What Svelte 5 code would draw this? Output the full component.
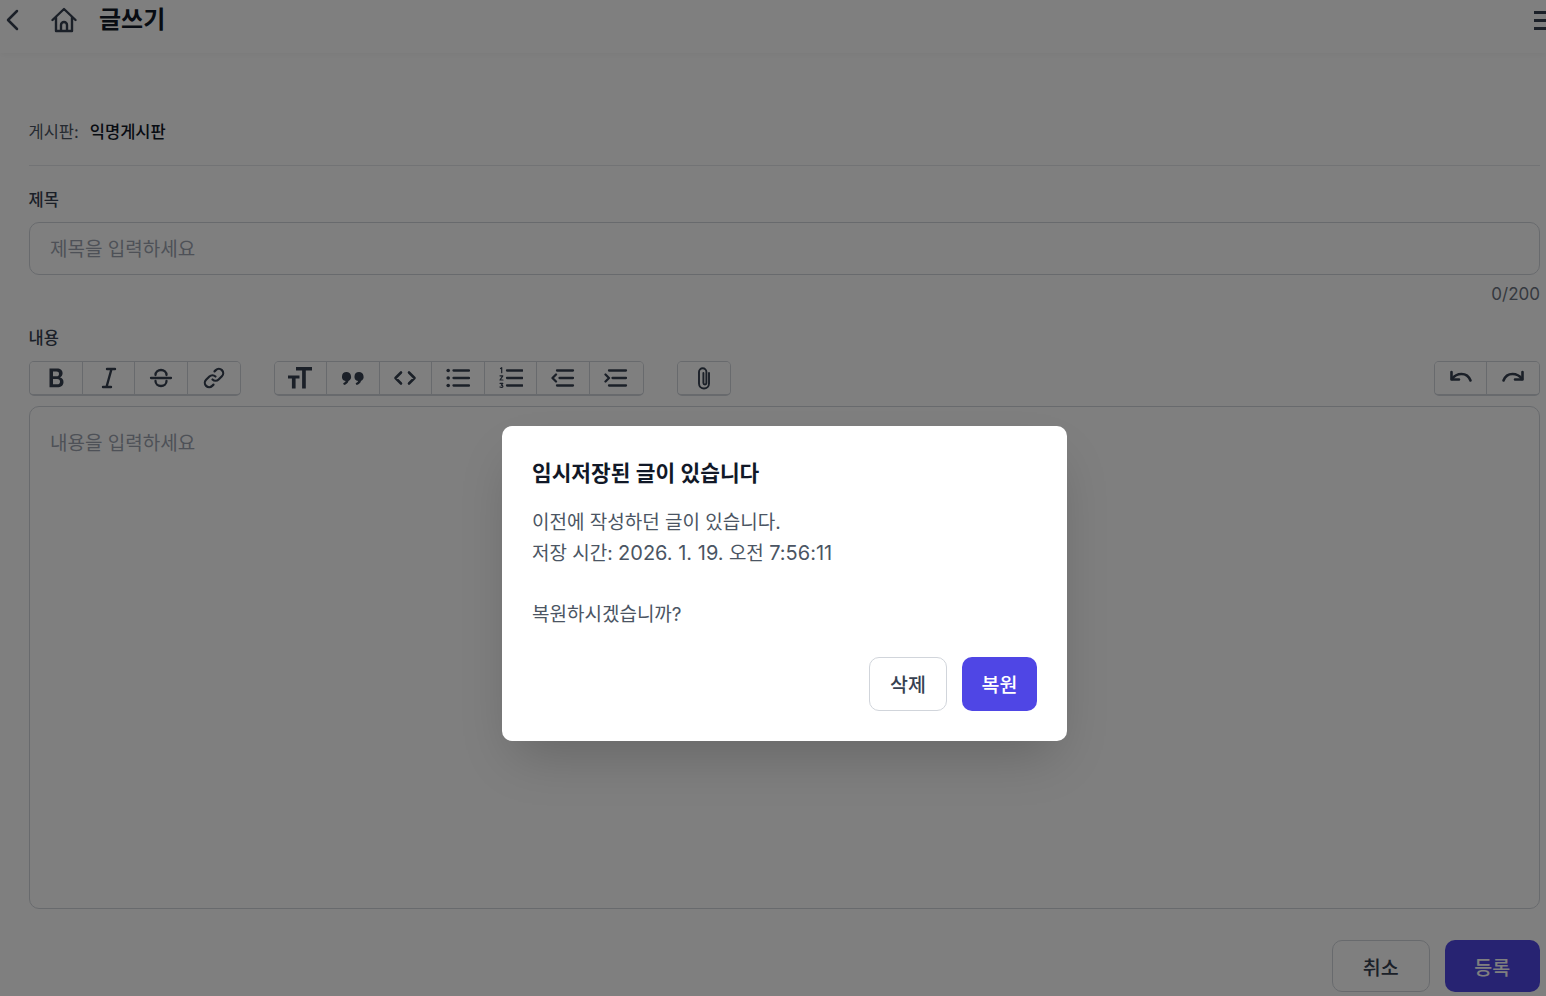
<script lang="ts">
	const formatGroup = [
		{ name: 'bold', width: 53.5 },
		{ name: 'italic', width: 52 },
		{ name: 'strike', width: 52.5 },
		{ name: 'link', width: 52 }
	];
	const blockGroup = ['heading', 'quote', 'code', 'ul', 'ol', 'outdent', 'indent'];
</script>

{#snippet icon(name: string)}
	<svg class="tool-icon" viewBox="0 0 24 24" aria-hidden="true">
		{#if name === 'bold'}
			<path class="fill" d="M5.500 2.500h7.600c3.400 0 5.500 1.800 5.500 4.700 0 1.900-1 3.400-2.700 4.100 2.300.6 3.600 2.300 3.600 4.600 0 3.300-2.400 5.400-6.200 5.400H5.500zM9 5.600v4.600h3.400c1.700 0 2.600-.8 2.600-2.300s-.9-2.300-2.600-2.300zm0 7.500v5.200h4.100c1.900 0 2.900-.9 2.900-2.600s-1-2.600-2.900-2.600z" />
		{:else if name === 'italic'}
			<path d="M10 3h8M6 21h8M14.500 3l-5 18" stroke-width="2.400" />
		{:else if name === 'strike'}
			<path d="M2 12h20M6.500 9c0-3 2.500-5 5.500-5s5.500 2 5.500 5M6.500 15c0 3 2.500 5 5.500 5s5.500-2 5.500-5" stroke-width="2.300" />
		{:else if name === 'link'}
			<path d="M10.500 13.500a4.300 4.300 0 0 0 6.100 0l3.300-3.300a4.300 4.300 0 0 0-6.100-6.100l-1.300 1.300M13.500 10.500a4.300 4.300 0 0 0-6.100 0l-3.300 3.300a4.300 4.300 0 0 0 6.100 6.100l1.300-1.300" stroke-width="2.200" />
		{:else if name === 'heading'}
			<path class="fill" d="M8 1h16v3.400h-6.200v18.100h-3.700V4.400H8zM0 9.500h11.500v3.100H7.600v9.900H3.900v-9.900H0z" />
		{:else if name === 'quote'}
			<path class="fill" d="M5.500 6a4.700 4.700 0 0 1 2 8.900c-.5 2-2.200 3.400-4.500 4l-.9-1.700c1.300-.5 2.200-1.200 2.500-2.100A4.600 4.600 0 0 1 5.500 6zM18 6a4.700 4.700 0 0 1 2 8.900c-.5 2-2.200 3.400-4.500 4l-.9-1.700c1.300-.5 2.200-1.200 2.500-2.100A4.600 4.600 0 0 1 18 6z" />
		{:else if name === 'code'}
			<path d="M8 6.500l-5.500 5.500 5.500 5.500M16 6.500l5.500 5.500-5.500 5.500" stroke-width="2.600" />
		{:else if name === 'ul'}
			<path d="M7.500 4.500h15.500M7.500 12h15.500M7.500 19.500h15.500" stroke-width="2.300" />
			<circle class="fill" cx="2.200" cy="4.500" r="1.800" />
			<circle class="fill" cx="2.200" cy="12" r="1.800" />
			<circle class="fill" cx="2.200" cy="19.500" r="1.800" />
		{:else if name === 'ol'}
			<path d="M8 4.500h15.500M8 12h15.500M8 19.500h15.500" stroke-width="2.300" />
			<path d="M1.500 2.500l1.200-.8v5M1 9.800h2.800L1 14h3M1 17.300h2.800l-1.500 1.900c1.100 0 1.600.5 1.600 1.200 0 1-1.800 1.300-2.900.6" stroke-width="1.200" />
		{:else if name === 'outdent'}
			<path d="M6 4.500h16M8.500 12H22M6 19.500h16" stroke-width="2.300" />
			<path d="M5 8.500L1.500 12 5 15.500" stroke-width="2.300" />
		{:else if name === 'indent'}
			<path d="M5 4.500h17M8.500 12H22M5 19.500h17" stroke-width="2.300" />
			<path d="M1.500 8.500L5 12l-3.500 3.500" stroke-width="2.300" />
		{:else if name === 'clip'}
			<path d="M17 7v10.500a5 5 0 0 1-10 0V6a3.700 3.700 0 0 1 7.400 0v11a1.500 1.500 0 0 1-3 0V7" stroke-width="1.900" />
		{:else if name === 'undo'}
			<path d="M2.500 6v7.500H10" stroke-width="2.600" />
			<path d="M3 13c2.500-3.500 5.500-5 9.500-5 4.500 0 7.500 2.500 9 6.500" stroke-width="2.600" />
		{:else if name === 'redo'}
			<path d="M21.500 6v7.500H14" stroke-width="2.600" />
			<path d="M21 13c-2.500-3.500-5.500-5-9.500-5-4.500 0-7.500 2.500-9 6.500" stroke-width="2.600" />
		{/if}
	</svg>
{/snippet}

<div class="page">
	<header class="topbar">
		<div class="topbar-left">
			<svg class="back" viewBox="0 0 14 22" aria-hidden="true">
				<path d="M12 2L3 11l9 9" />
			</svg>
			<svg class="home" viewBox="0 0 26 26" aria-hidden="true">
				<path d="M1.500 13L13 2l11.500 11M5 10v14h16V10M10 24v-6a3 3 0 0 1 6 0v6" />
			</svg>
			<h1>글쓰기</h1>
		</div>
		<div class="hamburger"><span></span><span></span><span></span></div>
	</header>

	<main class="form">
		<div class="board-row">
			<span class="board-label">게시판:</span>
			<strong>익명게시판</strong>
		</div>

		<label class="field-label title-label" for="title">제목</label>
		<input id="title" class="title-input" placeholder="제목을 입력하세요" />
		<div class="counter">0/200</div>

		<div class="field-label content-label">내용</div>
		<div class="toolbar">
			<div class="tool-group">
				{#each formatGroup as tool}
					<button class="tool" style="width: {tool.width}px">{@render icon(tool.name)}</button>
				{/each}
			</div>
			<div class="tool-group">
				{#each blockGroup as name}
					<button class="tool">{@render icon(name)}</button>
				{/each}
			</div>
			<div class="tool-group">
				<button class="tool">{@render icon('clip')}</button>
			</div>
			<div class="tool-group push-right">
				<button class="tool">{@render icon('undo')}</button>
				<button class="tool">{@render icon('redo')}</button>
			</div>
		</div>
		<div class="editor">내용을 입력하세요</div>

		<div class="actions">
			<button class="btn-cancel">취소</button>
			<button class="btn-submit">등록</button>
		</div>
	</main>

	<div class="overlay">
		<div class="dialog">
			<h2>임시저장된 글이 있습니다</h2>
			<p>
				이전에 작성하던 글이 있습니다.<br />
				저장 시간: <span class="latin">2026. 1. 19.</span> 오전 <span class="latin">7:56:11</span><br /><br />
				복원하시겠습니까?
			</p>
			<div class="dialog-actions">
				<button class="btn-delete">삭제</button>
				<button class="btn-restore">복원</button>
			</div>
		</div>
	</div>
</div>

<style>
	:global(body) {
		margin: 0;
		background: #fff;
		overflow: hidden;
	}

	.page {
		position: relative;
		height: 996px;
		overflow: hidden;
		background: #fff;
		font-family: Inter, "Noto Sans CJK KR", sans-serif;
		color: #111827;
	}

	.topbar {
		display: flex;
		justify-content: space-between;
		align-items: center;
		height: 53px;
		box-sizing: border-box;
		padding: 0 0 13px 5px;
		box-shadow: 0 2px 6px rgba(0, 0, 0, 0.04);
	}

	.topbar-left { display: flex; align-items: center; }

	.back {
		width: 14px;
		height: 22px;
		fill: none;
		stroke: #374151;
		stroke-width: 2.5;
		stroke-linecap: round;
		stroke-linejoin: round;
	}

	.home {
		width: 26px;
		height: 26px;
		margin-left: 32px;
		fill: none;
		stroke: #374151;
		stroke-width: 2.4;
		stroke-linecap: round;
		stroke-linejoin: round;
	}

	h1 {
		margin: 0 0 0 22px;
		font-size: 24px;
		font-weight: 700;
		line-height: 40px;
		color: #111827;
	}

	.hamburger {
		display: flex;
		flex-direction: column;
		gap: 5px;
		width: 20px;
		margin-right: -8px;
	}

	.hamburger span {
		height: 3px;
		background: #374151;
	}

	.form {
		display: flex;
		flex-direction: column;
		padding: 0 6px 0 28.5px;
	}

	.board-row {
		display: flex;
		gap: 11px;
		align-items: center;
		height: 113px;
		box-sizing: border-box;
		padding-top: 43px;
		border-bottom: 1px solid #e5e7eb;
		font-size: 16.5px;
	}

	.board-label { color: #4b5563; }

	.board-row strong { font-weight: 500; color: #111827; }

	.field-label {
		font-size: 16.5px;
		font-weight: 500;
		line-height: 24px;
		color: #374151;
	}

	.title-label { margin-top: 22px; }

	.title-input {
		height: 53px;
		margin-top: 10px;
		box-sizing: border-box;
		padding: 2px 20.5px 0;
		border: 1.5px solid #d1d5db;
		border-radius: 10px;
		font: inherit;
		font-size: 19px;
		outline: none;
	}

	.title-input::placeholder { color: #9ca3af; }

	.counter {
		margin-top: 7px;
		line-height: 24px;
		text-align: right;
		font-size: 17px;
		color: #6b7280;
	}

	.content-label { margin-top: 20px; }

	.toolbar {
		display: flex;
		gap: 33px;
		margin-top: 11px;
	}

	.tool-group {
		display: flex;
		height: 35px;
		box-sizing: border-box;
		border: 1px solid #d1d5db;
		border-bottom-width: 2px;
		border-radius: 5px;
		overflow: hidden;
	}

	.push-right { margin-left: auto; }

	.tool {
		display: flex;
		align-items: center;
		justify-content: center;
		width: 52.6px;
		padding: 0;
		border: 0;
		border-right: 1px solid #d1d5db;
		background: #fff;
	}

	.tool:last-child { border-right: 0; }

	.push-right .tool { width: 52px; }

	.tool-icon {
		width: 24px;
		height: 24px;
		fill: none;
		stroke: #374151;
		stroke-linecap: round;
		stroke-linejoin: round;
	}

	.tool-icon :global(.fill) {
		fill: #374151;
		stroke: none;
	}

	.editor {
		height: 503px;
		margin-top: 10px;
		box-sizing: border-box;
		padding: 22px 20.5px;
		border: 1.5px solid #d1d5db;
		border-radius: 10px;
		font-size: 19px;
		line-height: 30px;
		color: #9ca3af;
	}

	.actions {
		display: flex;
		justify-content: flex-end;
		gap: 15px;
		margin-top: 31px;
	}

	.actions button,
	.dialog-actions button {
		box-sizing: border-box;
		border-radius: 10px;
		font: inherit;
		font-size: 19.5px;
		font-weight: 500;
	}

	.actions button { height: 52px; }

	.dialog-actions button { height: 54px; }

	.btn-cancel {
		width: 97.5px;
		background: #fff;
		border: 1.5px solid #d1d5db;
		color: #374151;
	}

	.btn-submit {
		width: 95.5px;
		border: 0;
		background: #4f46e5;
		color: #fff;
	}

	.overlay {
		position: absolute;
		inset: 0;
		background: rgba(0, 0, 0, 0.5);
	}

	.dialog {
		position: absolute;
		left: 502px;
		top: 426px;
		width: 565px;
		height: 315px;
		box-sizing: border-box;
		padding: 30px;
		border-radius: 10px;
		background: #fff;
		box-shadow: 0 25px 50px -12px rgba(0, 0, 0, 0.2);
	}

	h2 {
		margin: 0;
		font-size: 21.4px;
		font-weight: 600;
		line-height: 34px;
		color: #111827;
	}

	p {
		margin: 18px 0 0;
		font-size: 19px;
		line-height: 30.4px;
		color: #4b5563;
	}

	.latin { font-size: 20px; }

	.dialog-actions {
		display: flex;
		justify-content: flex-end;
		gap: 15px;
		margin-top: 26px;
	}

	.btn-delete {
		width: 78px;
		background: #fff;
		border: 1.5px solid #d1d5db;
		color: #374151;
	}

	.btn-restore {
		width: 75px;
		border: 0;
		background: #4f46e5;
		color: #fff;
	}
</style>
